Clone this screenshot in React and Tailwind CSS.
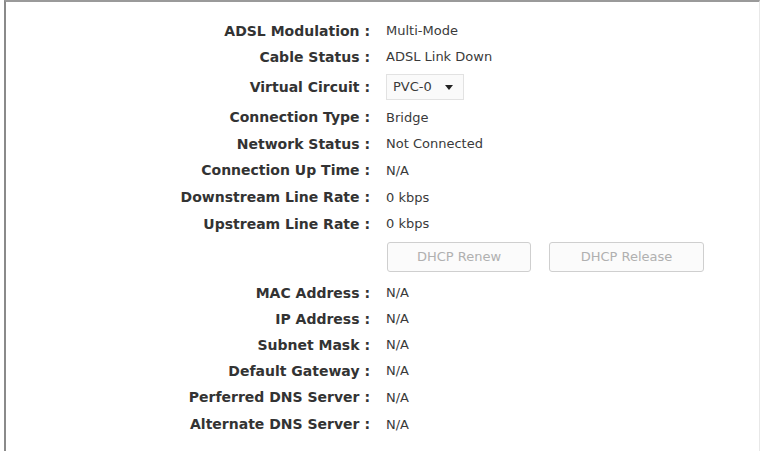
import React from "react";

const rows1 = [
  ["ADSL Modulation :", "Multi-Mode", "h-[26px]"],
  ["Cable Status :", "ADSL Link Down", "h-[26px]"],
  ["Virtual Circuit :", "SELECT", "h-[34px]"],
  ["Connection Type :", "Bridge", "h-[27px]"],
  ["Network Status :", "Not Connected", "h-[26px]"],
  ["Connection Up Time :", "N/A", "h-[27px]"],
  ["Downstream Line Rate :", "0 kbps", "h-[27px]"],
  ["Upstream Line Rate :", "0 kbps", "h-[26px]"],
];

const rows2 = [
  ["MAC Address :", "N/A", "h-[26px]"],
  ["IP Address :", "N/A", "h-[26px]"],
  ["Subnet Mask :", "N/A", "h-[26px]"],
  ["Default Gateway :", "N/A", "h-[26px]"],
  ["Perferred DNS Server :", "N/A", "h-[27px]"],
  ["Alternate DNS Server :", "N/A", "h-[27px]"],
];

function Row({ label, value, h }) {
  return (
    <div className={`flex items-center ${h}`}>
      <div className="w-[364px] text-right font-bold text-[14px] text-[#333]">
        {label}
      </div>
      <div className="pl-[16px] text-[13px] text-[#3a3a3a]">
        {value === "SELECT" ? (
          <div className="flex items-center w-[78px] h-[26px] border border-[#e2e2e2] bg-[#fafafa] pl-[6px] gap-[13px]">
            <span>PVC-0</span>
            <svg width="8" height="5" viewBox="0 0 8 5">
              <path d="M0 0 L8 0 L4 5 Z" fill="#222" />
            </svg>
          </div>
        ) : (
          value
        )}
      </div>
    </div>
  );
}

export default function App() {
  return (
    <div className="w-[762px] h-[451px] bg-white overflow-hidden" style={{ fontFamily: "'DejaVu Sans', sans-serif" }}>
      <div className="ml-[4px] mr-[2px] h-full border-l-2 border-t-2 border-r border-l-[#8a8a8a] border-t-[#9a9a9a] border-r-[#e8e8e8] pt-[16px]">
        {rows1.map(([l, v, h]) => (
          <Row key={l} label={l} value={v} h={h} />
        ))}
        <div className="h-[43px] flex pl-[381px] pt-[5px] gap-[18px]">
          <div className="w-[144px] h-[30px] border border-[#cfcfcf] rounded-[3px] bg-[#fbfbfb] flex items-center justify-center text-[13px] text-[#b0b0b0]">
            DHCP Renew
          </div>
          <div className="w-[155px] h-[30px] border border-[#cfcfcf] rounded-[3px] bg-[#fbfbfb] flex items-center justify-center text-[13px] text-[#b0b0b0]">
            DHCP Release
          </div>
        </div>
        {rows2.map(([l, v, h]) => (
          <Row key={l} label={l} value={v} h={h} />
        ))}
      </div>
    </div>
  );
}
